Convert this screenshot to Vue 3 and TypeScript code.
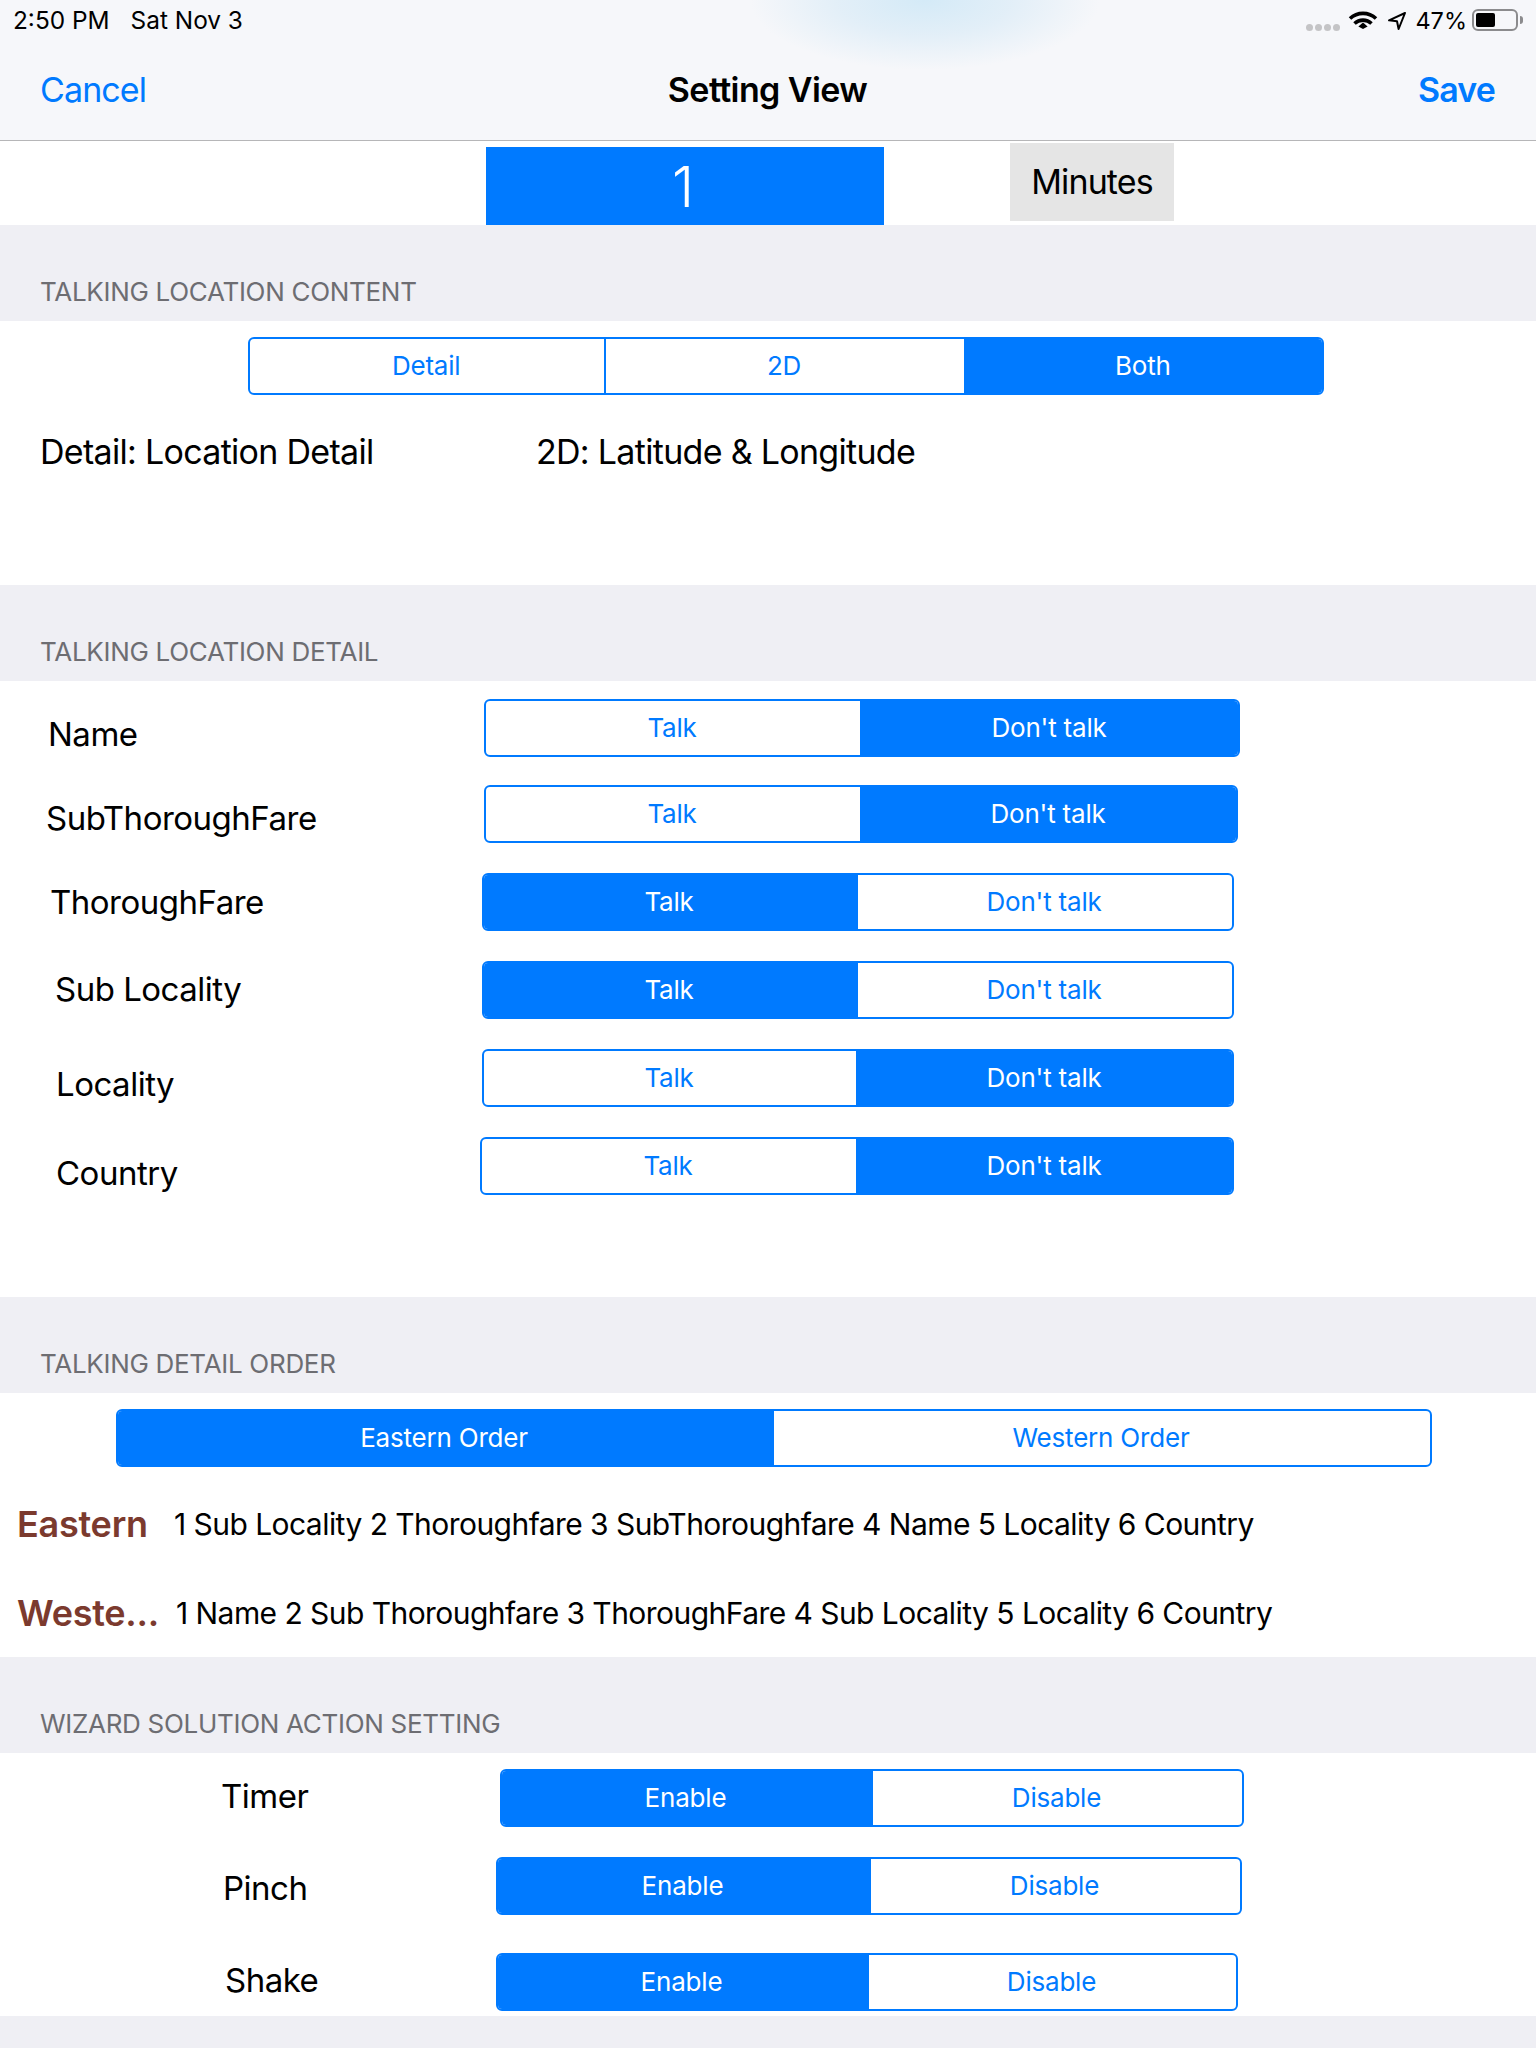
<script setup lang="ts">
// Setting view of the talking-location app, iPad portrait

interface Part {
  text: string
  share: number
  on?: boolean
}

interface Row {
  label?: string
  labelX?: number
  labelShift?: number
  x: number
  width: number
  gap: number
  parts: Part[]
}

interface Note {
  title?: string
  text: string
  x: number
  gap: number
  titleWidth?: number
}

interface Section {
  title: string
  rows: Row[]
  notes?: Note[]
  twoCol?: boolean
  bottom: number
}

const talk = (
  label: string,
  labelX: number,
  labelShift: number,
  x: number,
  width: number,
  gap: number,
  split: number,
  talking: boolean,
): Row => ({
  label,
  labelX,
  labelShift,
  x,
  width,
  gap,
  parts: [
    { text: 'Talk', share: split - x, on: talking },
    { text: "Don't talk", share: x + width - split, on: !talking },
  ],
})

const wizard = (
  label: string,
  labelX: number,
  labelShift: number,
  x: number,
  width: number,
  gap: number,
  split: number,
): Row => ({
  label,
  labelX,
  labelShift,
  x,
  width,
  gap,
  parts: [
    { text: 'Enable', share: split - x, on: true },
    { text: 'Disable', share: x + width - split },
  ],
})

const sections: Section[] = [
  {
    title: 'Talking Location Content',
    rows: [
      {
        x: 248,
        width: 1076,
        gap: 16,
        parts: [
          { text: 'Detail', share: 357 },
          { text: '2D', share: 360 },
          { text: 'Both', share: 359, on: true },
        ],
      },
    ],
    twoCol: true,
    notes: [],
    bottom: 0,
  },
  {
    title: 'Talking Location Detail',
    rows: [
      talk('Name', 48, 6, 484, 756, 18, 861, false),
      talk('SubThoroughFare', 46, 4, 484, 754, 28, 861, false),
      talk('ThoroughFare', 50, 0, 482, 752, 30, 857, true),
      talk('Sub Locality', 55, -1, 482, 752, 30, 857, true),
      talk('Locality', 56, 6, 482, 752, 30, 857, false),
      talk('Country', 56, 7, 480, 754, 30, 857, false),
    ],
    bottom: 102,
  },
  {
    title: 'Talking Detail Order',
    rows: [
      {
        x: 116,
        width: 1316,
        gap: 16,
        parts: [
          { text: 'Eastern Order', share: 657, on: true },
          { text: 'Western Order', share: 659 },
        ],
      },
    ],
    notes: [
      { title: 'Eastern', text: '1 Sub Locality 2 Thoroughfare 3 SubThoroughfare 4 Name 5 Locality 6 Country', x: 17, titleWidth: 157, gap: 37 },
      { title: 'Weste...', text: '1 Name 2 Sub Thoroughfare 3 ThoroughFare 4 Sub Locality 5 Locality 6 Country', x: 17, titleWidth: 159, gap: 49 },
    ],
    bottom: 24,
  },
  {
    title: 'Wizard Solution Action Setting',
    rows: [
      wizard('Timer', 221, -2, 500, 744, 16, 872),
      wizard('Pinch', 223, 2, 496, 746, 30, 870),
      wizard('Shake', 225, -2, 496, 742, 38, 868),
    ],
    bottom: 5,
  },
]

const wifiArcs = ['M2 10.5a19 19 0 0 1 26 0', 'M6.5 15.5a12.5 12.5 0 0 1 17 0']
</script>

<template>
  <div class="screen">
    <header class="top">
      <div class="status">
        <span class="clock">2:50 PM</span>
        <span class="date">Sat Nov 3</span>
        <span class="status-right">
          <span class="dots"><i v-for="n in 4" :key="n"></i></span>
          <svg class="wifi" width="30" height="22" viewBox="0 0 30 22" fill="none">
            <path v-for="d in wifiArcs" :key="d" :d="d" stroke="#000" stroke-width="3.6" />
            <path d="M10.4 19.6 15 15.4l4.6 4.2L15 22z" fill="#000" transform="translate(0 -1)" />
          </svg>
          <svg class="arrow" width="20" height="20" viewBox="0 0 20 20" fill="none">
            <path d="M18 2 2 9.3l8 1 1.6 7.7z" stroke="#000" stroke-width="2" stroke-linejoin="round" />
          </svg>
          <span class="percent">47%</span>
          <span class="battery"><b></b></span>
          <span class="nub"></span>
        </span>
      </div>
      <nav class="bar">
        <span class="cancel">Cancel</span>
        <span class="title">Setting View</span>
        <span class="save">Save</span>
      </nav>
    </header>

    <div class="timer-row">
      <div class="timer-value">1</div>
      <div class="timer-unit">Minutes</div>
    </div>

    <section v-for="section in sections" :key="section.title">
      <h2 class="section-head">{{ section.title }}</h2>
      <div class="section-body" :class="{ 'first-body': section.twoCol }" :style="{ paddingBottom: section.bottom + 'px' }">
        <div
          v-for="row in section.rows"
          :key="row.x + (row.label ?? '')"
          class="row"
          :style="{ marginTop: row.gap + 'px' }"
        >
          <span
            v-if="row.label"
            class="row-label"
            :style="{
              marginLeft: row.labelX + 'px',
              width: row.x - (row.labelX ?? 0) + 'px',
              marginTop: (row.labelShift ?? 0) * 2 + 'px',
            }"
          >{{ row.label }}</span>
          <div
            class="seg"
            :style="{ marginLeft: row.label ? '0' : row.x + 'px', width: row.width + 'px' }"
          >
            <div
              v-for="part in row.parts"
              :key="part.text"
              class="seg-part"
              :class="{ on: part.on }"
              :style="{ flexGrow: part.share }"
            >{{ part.text }}</div>
          </div>
        </div>

        <div v-if="section.twoCol" class="legend">
          <span class="legend-a">Detail: Location Detail</span>
          <span>2D: Latitude &amp; Longitude</span>
        </div>

        <div
          v-for="note in section.notes"
          :key="note.text"
          class="note"
          :style="{ marginTop: note.gap + 'px', paddingLeft: note.x + 'px' }"
        >
          <strong :style="{ width: note.titleWidth + 'px' }">{{ note.title }}</strong>
          <span>{{ note.text }}</span>
        </div>
      </div>
    </section>
  </div>
</template>

<style>
html,
body {
  margin: 0;
  background: #efeff4;
}
</style>

<style scoped>
.screen {
  width: 1536px;
  height: 2048px;
  overflow: hidden;
  background: #efeff4;
  font-family: Inter, "Noto Sans", "Liberation Sans", sans-serif;
  color: #000;
}

/* status + nav */
.top {
  height: 140px;
  border-bottom: 2px solid #b6b6b8;
  box-sizing: content-box;
  margin-bottom: -1px;
  background:
    radial-gradient(ellipse 175px 70px at 925px 0, #d4eaf7 0%, rgba(220, 236, 247, 0.75) 50%, rgba(246, 247, 250, 0) 100%),
    #f6f7fa;
}

.status {
  height: 40px;
  display: flex;
  align-items: center;
  padding-left: 13px;
  font-size: 24.4px;
  letter-spacing: 0;
}

.date {
  margin-left: 21px;
}

.status-right {
  margin-left: auto;
  padding-right: 13px;
  display: flex;
  align-items: center;
}

.dots {
  display: flex;
  gap: 2px;
  margin-top: 14px;
}

.dots i {
  width: 7px;
  height: 7px;
  border-radius: 50%;
  background: #c4c4c6;
}

.wifi {
  margin-left: 8px;
  margin-top: -2px;
}

.arrow {
  margin-left: 9px;
  margin-top: 1px;
}

.percent {
  margin-left: 8px;
  font-size: 23.5px;
  letter-spacing: 0;
}

.battery {
  margin-left: 5px;
  width: 46px;
  height: 22px;
  box-sizing: border-box;
  border: 2px solid #8b8b8d;
  border-radius: 6px;
  padding: 2px;
}

.battery b {
  display: block;
  width: 19px;
  height: 14px;
  border-radius: 2px;
  background: #000;
}

.nub {
  width: 3px;
  height: 8px;
  margin-left: 2px;
  border-radius: 0 3px 3px 0;
  background: #8b8b8d;
}

.bar {
  height: 100px;
  display: grid;
  grid-template-columns: 1fr auto 1fr;
  align-items: center;
  padding: 0 41px 2px 40px;
  box-sizing: border-box;
  font-size: 34px;
  letter-spacing: -0.9px;
}

.cancel {
  color: #007aff;
}

.title {
  font-weight: 600;
  letter-spacing: -0.6px;
}

.save {
  justify-self: end;
  color: #007aff;
  font-weight: 600;
}

/* timer picker */
.timer-row {
  height: 84px;
  display: flex;
  align-items: flex-start;
  background: #fff;
  padding-left: 486px;
}

.timer-value {
  width: 398px;
  height: 78px;
  margin-top: 6px;
  padding-right: 4px;
  box-sizing: border-box;
  background: #007aff;
  color: #fff;
  font-size: 56px;
  font-weight: 300;
  line-height: 80px;
  text-align: center;
}

.timer-unit {
  width: 164px;
  height: 78px;
  margin: 2px 0 0 126px;
  background: #e5e5e5;
  font-size: 34px;
  line-height: 78px;
  text-align: center;
  letter-spacing: -0.9px;
}

/* sections */
.section-head {
  height: 96px;
  margin: 0;
  padding: 0 0 0 40px;
  box-sizing: border-box;
  font-size: 26px;
  font-weight: 400;
  line-height: 134px;
  letter-spacing: -0.3px;
  text-transform: uppercase;
  color: #6d6d72;
}

.section-body {
  display: flow-root;
  background: #fff;
}

.first-body {
  height: 264px;
}

.row {
  display: flex;
  align-items: center;
  height: 58px;
}

.row-label {
  flex: none;
  font-size: 33px;
  letter-spacing: -0.5px;
}

.seg {
  flex: none;
  display: flex;
  height: 58px;
  box-sizing: border-box;
  border: 2px solid #007aff;
  border-radius: 6px;
  overflow: hidden;
}

.seg-part {
  flex-basis: 0;
  display: flex;
  align-items: center;
  justify-content: center;
  padding: 0 2px 2px 0;
  font-size: 26px;
  letter-spacing: -0.2px;
  color: #007aff;
}

.seg-part + .seg-part {
  border-left: 2px solid #007aff;
}

.seg-part.on {
  background: #007aff;
  color: #fff;
}

.legend {
  display: flex;
  margin-top: 36px;
  padding-left: 40px;
  font-size: 34px;
  line-height: 42px;
  letter-spacing: -0.7px;
}

.legend-a {
  width: 496px;
}

.note {
  display: flex;
  align-items: center;
  height: 40px;
  font-size: 30px;
  letter-spacing: -0.55px;
  white-space: nowrap;
}

.note strong {
  flex: none;
  font-size: 36px;
  font-weight: 600;
  letter-spacing: -0.25px;
  color: #7b3a2e;
}
</style>
